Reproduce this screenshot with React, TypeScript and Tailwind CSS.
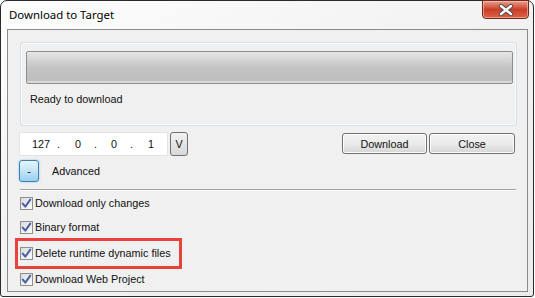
import React from "react";

const font = { fontFamily: '"Liberation Sans", Arial, sans-serif' };

function Check() {
  return (
    <div className="w-[13px] h-[13px] border border-[#8f8f8f] bg-gradient-to-br from-[#dcdcdc] to-[#fbfbfb] flex items-center justify-center shrink-0">
      <svg width="11" height="11" viewBox="0 0 11 11">
        <path d="M1.8 5.6 L4.3 8.6 L9.3 1.6" fill="none" stroke="#4a5fa8" strokeWidth="2" strokeLinecap="round" strokeLinejoin="round" />
      </svg>
    </div>
  );
}

function CheckRow({ label, className = "" }: { label: string; className?: string }) {
  return (
    <div className={`flex items-center h-[14px] ml-[12px] gap-[2px] ${className}`}>
      <Check />
      <span className="text-[10.8px] text-[#111] leading-none mt-[1px]">{label}</span>
    </div>
  );
}

function Btn({ label, w }: { label: string; w: string }) {
  return (
    <div
      className={`${w} h-[21px] pt-[2px] rounded-[3px] border border-[#707070] bg-gradient-to-b from-[#f2f2f2] via-[#ebebeb] to-[#d6d6d6] flex items-center justify-center text-[10.8px] text-[#111] shadow-[inset_0_0_0_1px_#fcfcfc]`}
    >
      {label}
    </div>
  );
}

export default function App() {
  return (
    <div className="w-[535px] h-[298px] bg-white overflow-hidden" style={font}>
      <div className="w-[534px] h-[297px] border border-[#2a2a2a] rounded-t-[7px] rounded-b-[3px] bg-gradient-to-br from-[#fdfdfd] via-[#f2f2f2] to-[#ececec] flex flex-col">
        <div className="h-[28px] flex items-start justify-between">
          <span className="ml-[8px] mt-[8px] text-[11.4px] text-black leading-none" style={{ fontFamily: '"Noto Sans", "Open Sans", sans-serif' }}>
            Download to Target
          </span>
          <div className="mr-[4px] -mt-[1px] w-[47px] h-[19px] rounded-b-[4px] border border-[#6b2a20] bg-gradient-to-b from-[#eb9d8c] via-[#c93d26] to-[#dc6248] flex items-center justify-center shadow-[inset_0_0_0_1px_rgba(255,220,210,0.5)]">
            <svg width="16" height="12" viewBox="0 0 16 12">
              <path d="M3 2 L13 10 M13 2 L3 10" stroke="#4a4a4a" strokeWidth="4.2" strokeLinecap="round" />
              <path d="M3 2 L13 10 M13 2 L3 10" stroke="#ffffff" strokeWidth="2.4" strokeLinecap="round" />
            </svg>
          </div>
        </div>
        <div className="ml-[6px] w-[521px] h-[263px] border border-[#8a8a8a] bg-[#f0f0f0] flex flex-col">
          <div className="ml-[12px] mt-[12px] w-[497px] h-[84px] rounded-[3px] border border-[#d5dfe5] flex flex-col shadow-[inset_0_0_0_1px_#fbfbfb]">
            <div className="ml-[5px] mt-[8px] w-[487px] h-[33px] rounded-[2px] border border-[#8e8e8e] bg-gradient-to-b from-[#e6e6e6] via-[#c4c4c4] to-[#bdbdbd] shadow-[inset_0_-2px_0_#d9d9d9]" />
            <span className="ml-[9px] mt-[10px] text-[10.8px] text-[#111] leading-none">Ready to download</span>
          </div>
          <div className="mt-[6px] px-[11px] flex items-start justify-between">
            <div className="flex items-start gap-[2px]">
              <div className="w-[149px] h-[24px] pt-[1px] bg-white border border-[#e3e3e3] flex items-center text-[10.8px] text-[#111]">
                <span className="ml-[12px] w-[18px]">127</span>
                <span className="ml-[7px]">.</span>
                <span className="ml-[15px]">0</span>
                <span className="ml-[13px]">.</span>
                <span className="ml-[14px]">0</span>
                <span className="ml-[13px]">.</span>
                <span className="ml-[15px]">1</span>
              </div>
              <div className="w-[18px] h-[24px] pt-[1px] rounded-[3px] border border-[#707070] bg-gradient-to-b from-[#f2f2f2] to-[#d8d8d8] flex items-center justify-center text-[10.8px] text-[#111]">
                V
              </div>
            </div>
            <div className="mt-[1px] mr-[1px] flex gap-[2px]">
              <Btn label="Download" w="w-[85px]" />
              <Btn label="Close" w="w-[86px]" />
            </div>
          </div>
          <div className="mt-[4px] ml-[11px] flex items-center">
            <div className="w-[20px] h-[22px] rounded-[3px] border border-[#3c7fb1] bg-gradient-to-b from-[#e5f4fc] via-[#c4e5f6] to-[#98d1ef] flex items-center justify-center text-[11px] text-[#111] shadow-[0_0_2px_#6fc3f0]">
              -
            </div>
            <span className="ml-[13px] mt-[1px] text-[10.8px] text-[#111] leading-none">Advanced</span>
          </div>
          <div className="mt-[7px] ml-[12px] w-[496px] h-[2px] border-t border-[#a0a0a0] border-b border-b-white" />
          <CheckRow label="Download only changes" className="mt-[5px]" />
          <CheckRow label="Binary format" className="mt-[10px]" />
          <div className="relative mt-[12px]">
            <CheckRow label="Delete runtime dynamic files" />
            <div className="absolute left-[7px] -top-[8px] w-[167px] h-[31px] border-[3px] border-[#e8423a]" />
          </div>
          <CheckRow label="Download Web Project" className="mt-[12px]" />
        </div>
      </div>
    </div>
  );
}
